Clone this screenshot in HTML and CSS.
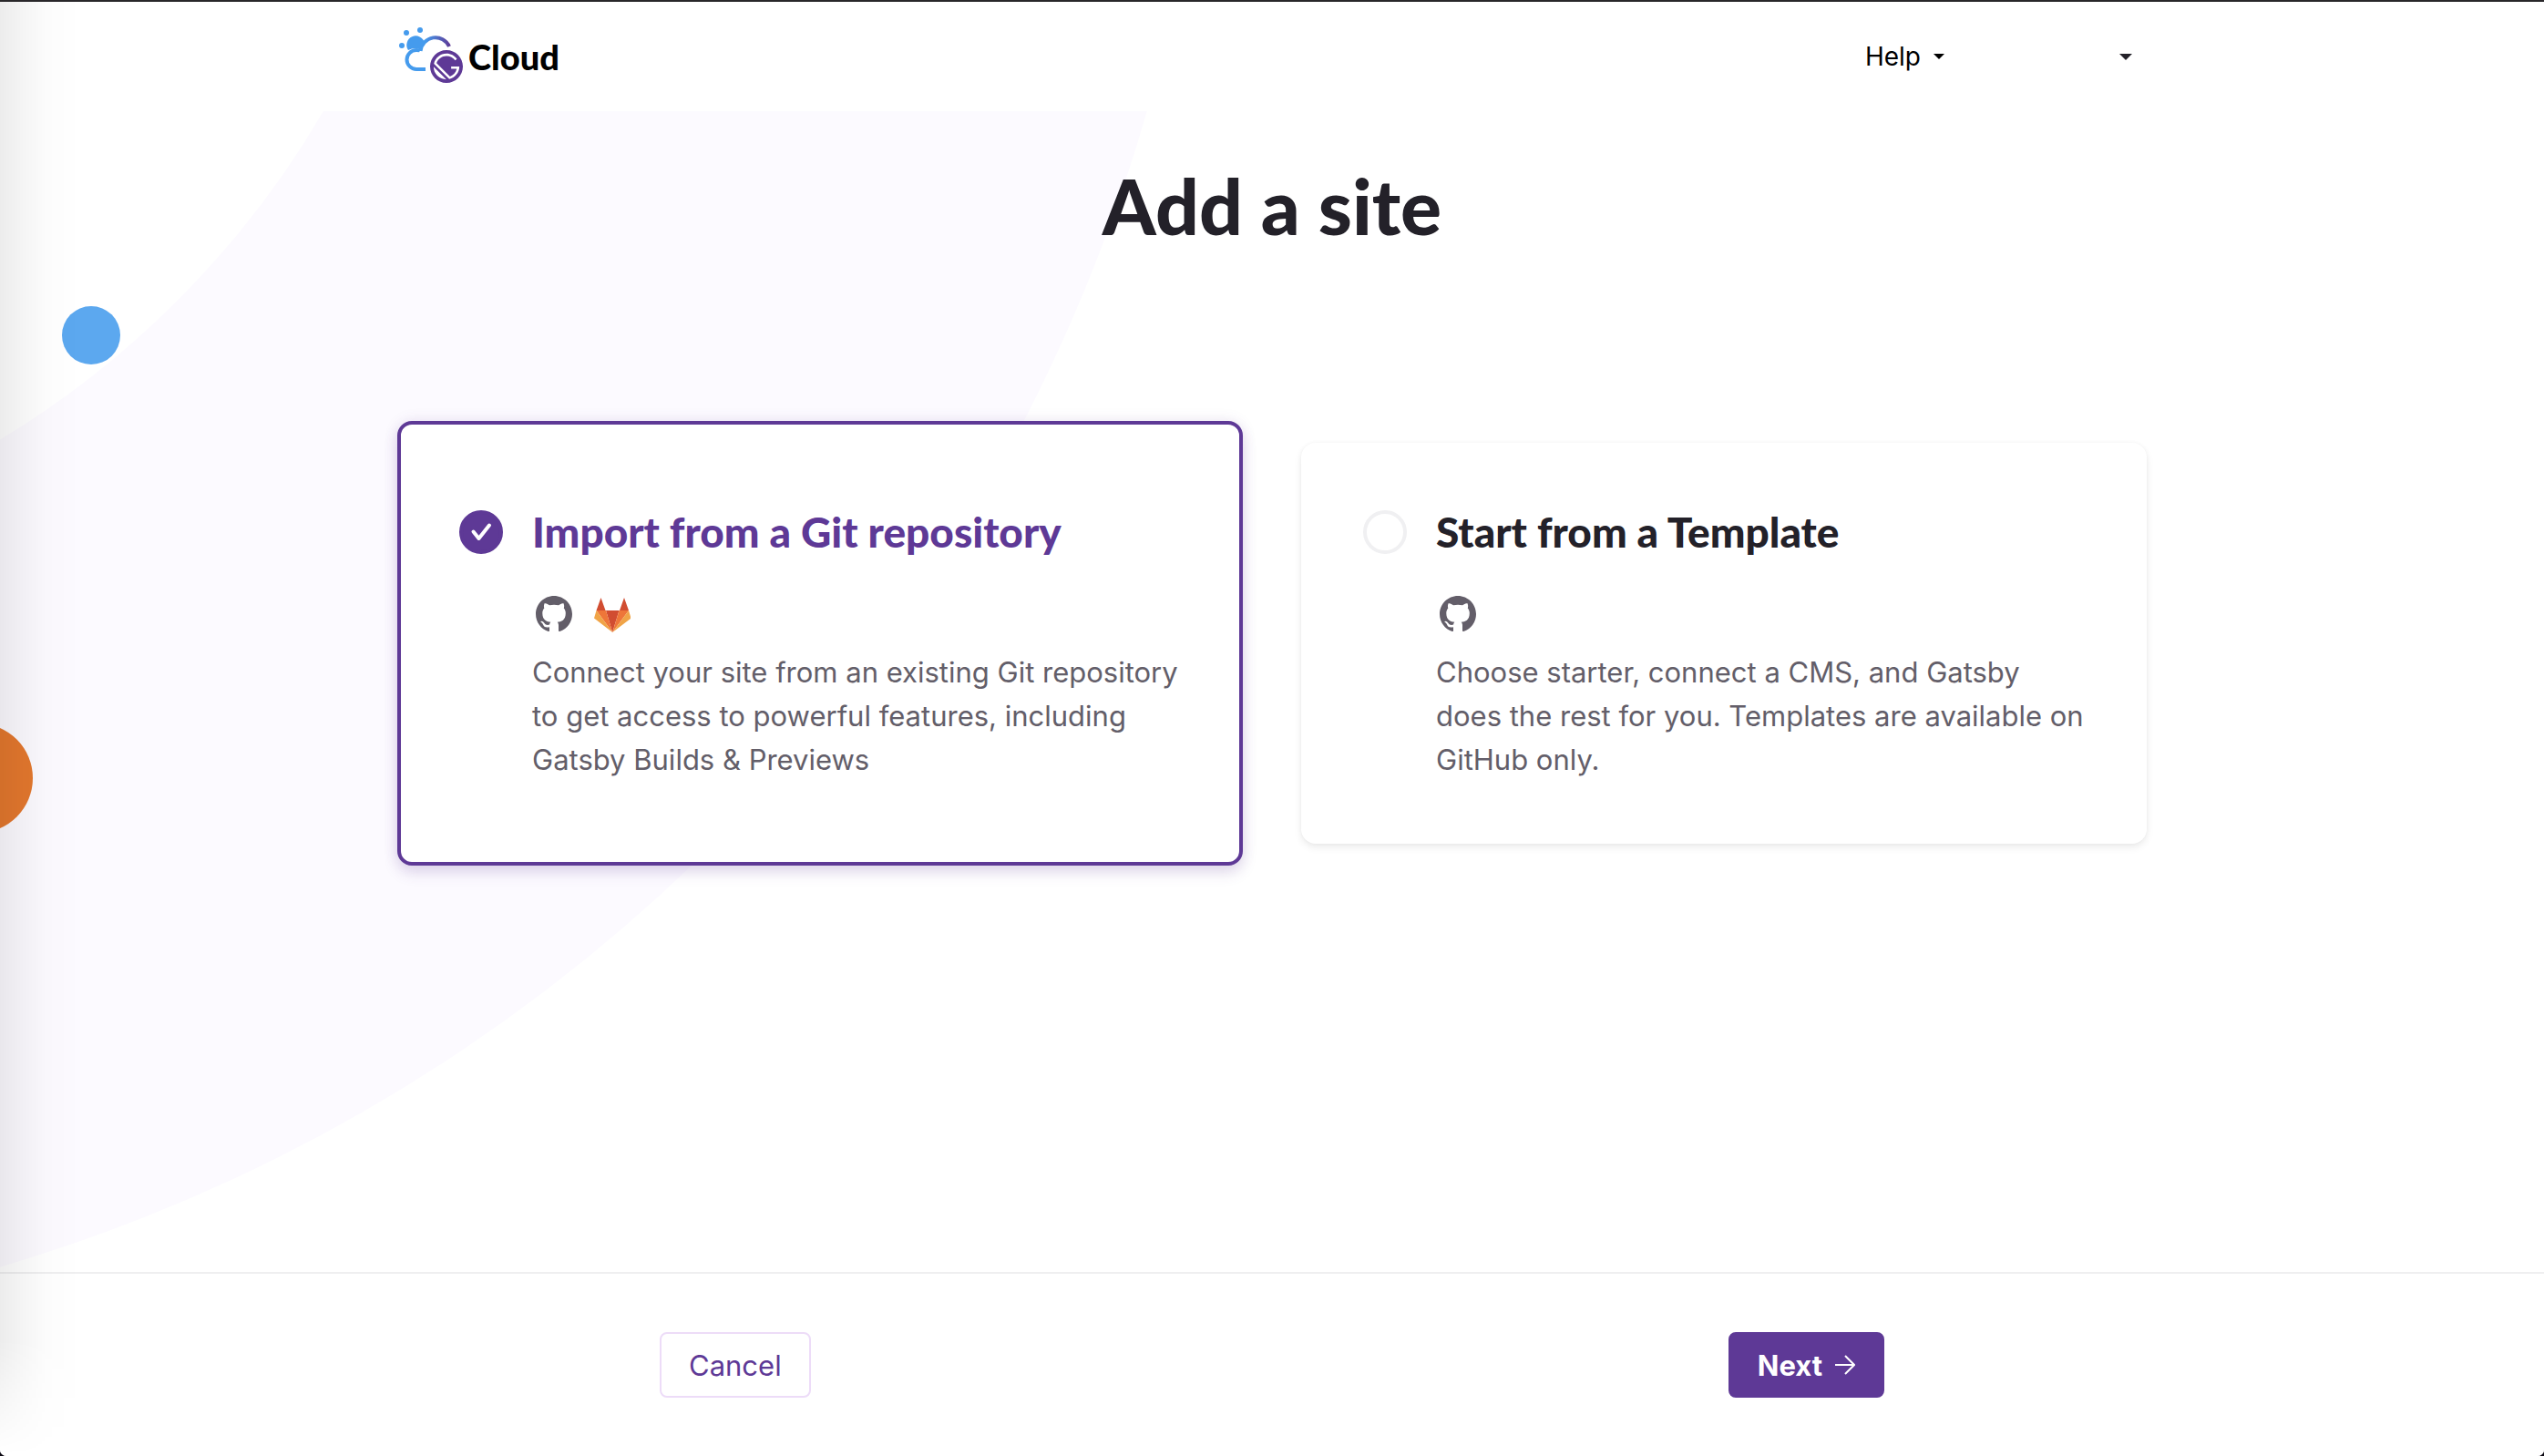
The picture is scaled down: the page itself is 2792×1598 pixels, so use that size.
FILE: index.html
```html
<!DOCTYPE html>
<html lang="en">
<head>
<meta charset="utf-8">
<meta name="viewport" content="width=device-width, initial-scale=1">
<title>Add a site</title>
<link rel="stylesheet" href="styles.css">
</head>
<body>
<svg class="sprite" aria-hidden="true">
  <symbol id="github" viewBox="0 0 16 16">
    <path fill="currentColor" d="M8 0C3.58 0 0 3.58 0 8c0 3.54 2.29 6.53 5.47 7.59.4.07.55-.17.55-.38 0-.19-.01-.82-.01-1.49-2.01.37-2.53-.49-2.69-.94-.09-.23-.48-.94-.82-1.13-.28-.15-.68-.52-.01-.53.63-.01 1.08.58 1.23.82.72 1.21 1.87.87 2.33.66.07-.52.28-.87.51-1.07-1.78-.2-3.64-.89-3.64-3.95 0-.87.31-1.59.82-2.15-.08-.2-.36-1.02.08-2.12 0 0 .67-.21 2.2.82.64-.18 1.32-.27 2-.27s1.36.09 2 .27c1.53-1.04 2.2-.82 2.2-.82.44 1.1.16 1.92.08 2.12.51.56.82 1.27.82 2.15 0 3.07-1.87 3.75-3.65 3.95.29.25.54.73.54 1.48 0 1.07-.01 1.93-.01 2.2 0 .21.15.46.55.38A8.01 8.01 0 0 0 16 8c0-4.42-3.58-8-8-8z"/>
  </symbol>
</svg>
<div class="page">
  <header class="header">
    <div class="container header-row">
      <a class="logo" href="#">
        <svg class="logo-mark" viewBox="0 0 74 64" aria-hidden="true">
          <defs>
            <linearGradient id="cloud" gradientUnits="userSpaceOnUse" x1="28" y1="0" x2="58" y2="0">
              <stop offset="0.1" stop-color="#459bed"/>
              <stop offset="1" stop-color="#5e3996"/>
            </linearGradient>
          </defs>
          <g fill="#459bed">
            <circle cx="5" cy="20" r="3"/>
            <circle cx="10" cy="6" r="3"/>
            <circle cx="25" cy="3" r="3"/>
            <path d="M12 25a10 10 0 1 1 18-8c-2 2-3 5-4 8-5-3-9-2-14 0z"/>
          </g>
          <g fill="none" stroke-width="4">
            <path stroke="#459bed" d="M31 46H21A10.500 10.500 0 0 1 21 25Q24 25 25 25.500"/>
            <path stroke="url(#cloud)" d="M25.500 26A16.500 16.500 0 0 1 57 21"/>
          </g>
          <path fill="#5e3996" transform="translate(36 25) scale(1.286)" d="M14 0C6.300 0 0 6.300 0 14s6.300 14 14 14 14-6.300 14-14S21.700 0 14 0zM6.200 21.800C4.100 19.700 3 16.900 3 14.200L13.900 25c-2.800-.1-5.600-1.100-7.700-3.200zm10.200 2.900L3.300 11.600C4.400 6.700 8.800 3 14 3c3.700 0 6.900 1.800 8.900 4.500l-1.500 1.300C19.700 6.500 17 5 14 5c-3.900 0-7.200 2.500-8.500 6L17 22.500c2.900-1 5.100-3.500 5.800-6.500H18v-2h7c0 5.200-3.700 9.600-8.600 10.700z"/>
        </svg>
        <span>Cloud</span>
      </a>
      <nav class="menus">
        <button class="menu" type="button">Help <span class="caret"></span></button>
        <button class="menu" type="button" aria-label="Account"><span class="caret caret-account"></span></button>
      </nav>
    </div>
  </header>

  <main class="main">
    <svg class="decoration" aria-hidden="true">
      <circle cx="-527" cy="-513" r="1439" fill="none" stroke="#fcfaff" stroke-width="838"/>
      <circle cx="100" cy="246" r="32" fill="#5ca8ef"/>
      <circle cx="-24" cy="732" r="60" fill="#e4782e"/>
    </svg>
    <form class="container content" id="add-site">
      <h1>Add a site</h1>
      <div class="options">
        <label class="card">
          <span class="radio">
            <input type="radio" name="source" checked>
            <svg viewBox="0 0 48 48" aria-hidden="true"><path d="M15.500 23.500L21.500 31 33 16.500" fill="none" stroke="#fff" stroke-width="4" stroke-linecap="round" stroke-linejoin="round"/></svg>
          </span>
          <span class="card-body">
            <strong class="card-title">Import from a Git repository</strong>
            <span class="hosts">
              <svg class="host" role="img" aria-label="GitHub"><use href="#github"/></svg>
              <svg class="host" viewBox="0 0 40 40" role="img" aria-label="GitLab">
                <path fill="#d14d31" d="M7.500 2L12.500 16H2.500zM33 2l5 14H28zM13 16h14.500L20.200 40z"/>
                <path fill="#ee7639" d="M2.500 16H13l7.200 24zM38 16H27.500l-7.300 24z"/>
                <path fill="#f0a447" d="M2.500 16L0 24.500 20.200 40zM38 16l2.500 8.500L20.200 40z"/>
              </svg>
            </span>
            <span class="card-text">Connect your site from an existing Git repository to get access to powerful features, including Gatsby Builds &amp; Previews</span>
          </span>
        </label>
        <label class="card">
          <span class="radio">
            <input type="radio" name="source">
          </span>
          <span class="card-body">
            <strong class="card-title">Start from a Template</strong>
            <span class="hosts">
              <svg class="host" role="img" aria-label="GitHub"><use href="#github"/></svg>
            </span>
            <span class="card-text">Choose starter, connect a CMS, and Gatsby does the rest for you. Templates are available on GitHub only.</span>
          </span>
        </label>
      </div>
    </form>
  </main>

  <footer class="footer">
    <div class="footer-row">
      <button class="button" type="button">Cancel</button>
      <button class="button button-primary" type="submit" form="add-site">Next
        <svg class="arrow" viewBox="0 0 22 22" aria-hidden="true"><path d="M0 11h20M11 1l10 10-10 10" fill="none" stroke="currentColor" stroke-width="2"/></svg>
      </button>
    </div>
  </footer>
</div>
</body>
</html>
```
FILE: styles.css
```css
:root {
  --purple: #5e3996;
  --ink: #232129;
  --grey: #635e69;
  --display: "Lato Black", Lato, sans-serif;
  --text: Inter, "Liberation Sans", sans-serif;
}

* {
  box-sizing: border-box;
}

body {
  margin: 0;
  background: #0c0913;
  color: var(--ink);
  font-family: var(--text);
}

button,
input {
  margin: 0;
  font: inherit;
}

.sprite {
  position: absolute;
  width: 0;
  height: 0;
}

.page {
  position: relative;
  display: flex;
  flex-direction: column;
  min-height: 100vh;
  border-top: 2px solid #29272a;
  border-radius: 0 0 7px 7px;
  background: #fff;
  overflow: hidden;
}

/* Shade along the left edge of the window */
.page::after {
  content: "";
  position: absolute;
  inset: 0 auto 0 0;
  width: 88px;
  background: linear-gradient(90deg, rgba(0, 0, 0, 0.075), rgba(0, 0, 0, 0.037) 34%, rgba(0, 0, 0, 0.012) 58%, transparent);
  mask-image: linear-gradient(0deg, transparent, #000 128px);
  pointer-events: none;
}

.container {
  width: 100%;
  max-width: 1920px;
  margin: 0 auto;
}

.header-row {
  display: flex;
  align-items: center;
  justify-content: space-between;
  min-height: 120px;
}

.logo {
  display: flex;
  align-items: center;
  gap: 4px;
  color: #000;
  font: 900 38px/64px var(--display);
  text-decoration: none;
}

.logo-mark {
  width: 74px;
  height: 64px;
}

.menus {
  display: flex;
  gap: 160px;
  padding-right: 16px;
}

.menu {
  display: flex;
  align-items: center;
  gap: 14px;
  padding: 0;
  border: 0;
  background: none;
  color: #000;
  font-size: 28px;
  line-height: 40px;
}

.caret {
  border: 6px solid transparent;
  border-top-color: currentColor;
  border-bottom: 0;
}

.caret-account {
  margin-left: 32px;
  border-width: 7px 7px 0;
  border-top-color: var(--ink);
}

.main {
  position: relative;
  flex: 1;
  overflow: hidden;
}

.decoration {
  position: absolute;
  inset: 0;
  width: 100%;
  height: 100%;
}

.content {
  position: relative;
}

h1 {
  margin: 0;
  padding: 54px 0 186px;
  font: 900 84px/100px var(--display);
  text-align: center;
}

.options {
  display: grid;
  grid-template-columns: 1fr 1fr;
  gap: 64px;
  align-items: center;
}

.card {
  display: flex;
  gap: 32px;
  padding: 68px 64px 68px 68px;
  border-radius: 16px;
  background: #fff;
  box-shadow: 0 4px 8px rgba(0, 0, 0, 0.08), 0 0 4px rgba(0, 0, 0, 0.04);
}

.card:has(:checked) {
  padding: 88px 60px 88px 64px;
  border: 4px solid var(--purple);
  box-shadow: 0 8px 16px rgba(94, 57, 150, 0.16), 0 0 16px rgba(94, 57, 150, 0.1);
}

.radio {
  display: grid;
  flex: none;
  width: 48px;
  height: 60px;
  align-items: center;
}

.radio > * {
  grid-area: 1 / 1;
  width: 48px;
  height: 48px;
}

.radio input {
  appearance: none;
  border: 4px solid #f0f0f2;
  border-radius: 50%;
  background: #fff;
}

.radio input:checked {
  border-color: var(--purple);
  background: var(--purple);
}

.radio svg {
  z-index: 1;
  pointer-events: none;
}

.card-body {
  display: flex;
  flex-direction: column;
}

.card-title {
  font: 900 46px/60px var(--display);
}

.card:has(:checked) .card-title {
  color: var(--purple);
}

.hosts {
  display: flex;
  gap: 24px;
  padding: 40px 4px 20px;
  color: var(--grey);
}

.host {
  width: 40px;
  height: 40px;
}

.card-text {
  color: var(--grey);
  font-size: 31px;
  line-height: 48px;
}

.footer {
  padding: 64px;
  border-top: 2px solid #efeff0;
  background: #fff;
}

.footer-row {
  display: flex;
  justify-content: space-between;
  max-width: 1344px;
  margin: 0 auto;
}

.button {
  display: flex;
  align-items: center;
  gap: 14px;
  height: 72px;
  padding: 0 30px;
  border: 2px solid #eddcf8;
  border-radius: 8px;
  background: #fff;
  color: var(--purple);
  font-size: 31px;
}

.button-primary {
  border-color: var(--purple);
  background: var(--purple);
  color: #fff;
  font-weight: 700;
}

.arrow {
  width: 22px;
  height: 22px;
}
```
